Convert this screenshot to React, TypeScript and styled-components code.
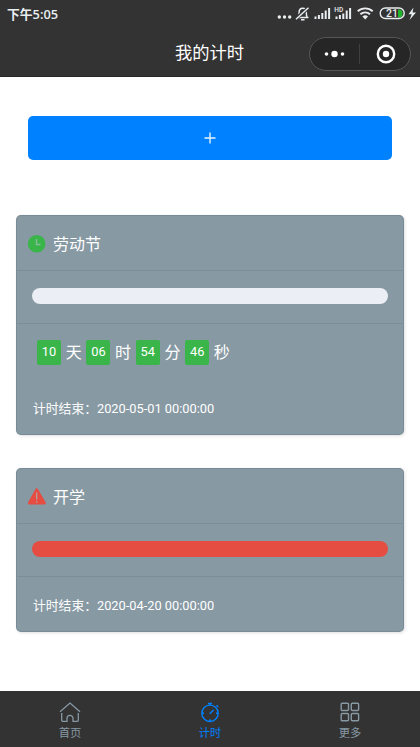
import React from "react";
import styled, { createGlobalStyle } from "styled-components";

const GlobalStyle = createGlobalStyle`
  * { box-sizing: border-box; }
  body { margin: 0; background: #fff; font-family: Roboto, "Noto Sans CJK SC", sans-serif; }
`;

const Screen = styled.div`
  display: flex;
  flex-direction: column;
  height: 747px;
  width: 420px;
  overflow: hidden;
`;

const Header = styled.header`
  height: 77px;
  background: #333;
  border-bottom: 1px solid #292626;
  color: #fff;
`;

const StatusBar = styled.div`
  display: flex;
  align-items: center;
  justify-content: space-between;
  height: 28px;
  padding: 0 3px 0 7px;
  color: #e9eef0;
`;

const Clock = styled.span`
  font: 600 12.8px/18px "Open Sans", "Noto Sans CJK SC", sans-serif;
`;

const NavBar = styled.div`
  display: grid;
  grid-template-columns: 1fr auto 1fr;
  align-items: center;
  height: 48px;
  padding: 1px 9px 0 0;
`;

const PageTitle = styled.h1`
  grid-column: 2;
  margin: 0;
  padding-left: 8px;
  font-size: 17.3px;
  font-weight: 400;
  line-height: 24px;
`;

const Capsule = styled.div`
  display: flex;
  align-items: center;
  justify-self: end;
  width: 102px;
  height: 34px;
  margin-top: 2px;
  border: 1px solid #565656;
  border-radius: 17px;
  background: #262626;
`;

const CapsuleHalf = styled.div`
  display: flex;
  flex: 1;
  align-items: center;
  justify-content: center;
  height: 20px;

  & + & {
    border-left: 1px solid #404040;
    padding-left: 1px;
  }
`;

const Content = styled.main`
  display: flex;
  flex: 1;
  flex-direction: column;
  padding: 39px 16px 0;
`;

const AddButton = styled.button`
  display: flex;
  align-items: center;
  justify-content: center;
  height: 44px;
  margin: 0 12px 55px;
  padding: 0;
  border: 0;
  border-radius: 5px;
  background: #0081ff;
`;

const Card = styled.section`
  margin-bottom: 33px;
  border-radius: 5px;
  background: #8799a3;
  box-shadow: 1px 1px 3px rgba(26, 26, 26, 0.14), inset 0 0 0 1px rgba(90, 110, 122, 0.3);
  color: #fff;
`;

const CardHeader = styled.div`
  display: flex;
  align-items: center;
  gap: 7px;
  height: 56px;
  padding: 2px 12px 0;
  border-bottom: 1px solid #7c8f99;
`;

const CardTitle = styled.h2`
  margin: 0;
  padding-top: 2px;
  font-size: 16px;
  font-weight: 400;
  line-height: 24px;
`;

const ProgressRow = styled.div`
  height: 53px;
  padding: 17px 16px 0;
  border-bottom: 1px solid #7c8f99;
`;

const Progress = styled.div<{ $done?: boolean }>`
  height: 16px;
  border-radius: 8px;
  background: ${(p) => (p.$done ? "#e54d42" : "#ebeef5")};
`;

const Countdown = styled.div`
  display: flex;
  align-items: center;
  height: 58px;
  padding: 0 0 2px 21px;
`;

const Digits = styled.span`
  display: flex;
  align-items: center;
  justify-content: center;
  width: 24px;
  height: 25px;
  padding-bottom: 1px;
  border-radius: 2px;
  background: #39b54a;
  font-size: 12.8px;
`;

const Unit = styled.span`
  width: 25.4px;
  padding-top: 2px;
  text-align: center;
  font-size: 16px;
  line-height: 24px;
`;

const EndTime = styled.div<{ $height: number; $lift?: number }>`
  display: flex;
  align-items: center;
  height: ${(p) => p.$height}px;
  padding: 0 17px ${(p) => p.$lift ?? 0}px;
  font-size: 12.8px;
  white-space: pre;
`;

const TabBar = styled.nav`
  display: grid;
  grid-template-columns: repeat(3, 1fr);
  height: 56px;
  background: #333;
`;

const Tab = styled.div<{ $active?: boolean }>`
  display: flex;
  flex-direction: column;
  align-items: center;
  padding-top: 10px;
  color: ${(p) => (p.$active ? "#0081ff" : "#8799a3")};
  font-size: 11.3px;
  line-height: 16px;

  svg {
    margin-bottom: 3px;
  }
`;

const BatteryText = styled.text`
  font: 500 10.5px Roboto, sans-serif;
`;

const HdText = styled.text`
  font: 500 6.5px Roboto, sans-serif;
`;

function StatusIcons() {
  return (
    <svg width="140" height="22" viewBox="0 0 140 22" fill="currentColor">
      <circle cx="2.300" cy="14" r="1.700" />
      <circle cx="7.500" cy="14" r="1.700" />
      <circle cx="12.700" cy="14" r="1.700" />
      <g fill="none" stroke="currentColor" strokeWidth="1.500">
        <path d="M19.500 14.500h12M21.300 14c.8-1 .8-2.500.8-4.500 0-2.800 1.400-4.300 3.600-4.300s3.600 1.500 3.600 4.300c0 2 0 3.500.8 4.500M24 16.700h3.500" />
        <path d="M18.500 16 31.500 4.800" stroke="#333" strokeWidth="3.500" />
        <path d="M19 16.300 31.500 4.800" />
      </g>
      <path d="M37.500 13.500h2V16h-2zM40.900 12h2v4h-2zM44.300 10h2v6h-2zM47.700 7.500h2V16h-2zM51.100 5h2v11h-2z" />
      <path d="M58.500 13.500h2V16h-2zM61.900 12h2v4h-2zM65.300 10.500h2V16h-2zM68.700 7.500h2V16h-2zM72.100 5h2v11h-2z" />
      <HdText x="57.300" y="8.700">HD</HdText>
      <g fill="none" stroke="currentColor" strokeWidth="1.900">
        <path d="M80.700 8.300a11 11 0 0 1 15 0M83.400 11.200a7.200 7.200 0 0 1 9.600 0" />
      </g>
      <path d="m88.200 16.500-2.800-3a4.300 4.300 0 0 1 5.600 0z" />
      <path d="M121 6.500h1a3.500 3.500 0 0 1 3.500 3.500v1a3.500 3.500 0 0 1-3.500 3.500h-1z" fill="#20b52a" />
      <rect x="103.200" y="5" width="24" height="10.500" rx="5.200" fill="none" stroke="currentColor" strokeWidth="1.400" />
      <BatteryText x="109" y="14">21</BatteryText>
      <path d="M136.500 4.500 131.500 11.300h3.200L132.500 17l6.500-7.500h-3.500z" />
    </svg>
  );
}

function ClockIcon() {
  return (
    <svg width="18" height="18" viewBox="0 0 18 18">
      <circle cx="8.700" cy="8.800" r="8.800" fill="#39b54a" />
      <path d="M8.500 4v5.500H12.500" fill="none" stroke="#87b99a" strokeWidth="1.400" />
    </svg>
  );
}

function WarnIcon() {
  return (
    <svg width="18" height="18" viewBox="0 0 18 18">
      <path d="M7.400 1.200q1.300-1.700 2.600 0L17.600 14.300q.8 2-1.200 2.200h-15Q-.5 16.300.1 14.300z" fill="#e54d42" />
      <path d="M8.700 4.500v7M8.700 13v1.500" stroke="#b0a4a4" strokeWidth="1.200" />
    </svg>
  );
}

function HomeIcon() {
  return (
    <svg width="22" height="22" viewBox="0 0 22 22" fill="none" stroke="currentColor" strokeWidth="1.300">
      <path d="M1 10.800 11 2l10 8.800M2.700 12v7.300q0 1 1 1H8v-3a3 3 0 0 1 6 0v3h4.300q1 0 1-1V12" />
    </svg>
  );
}

function TimerIcon() {
  return (
    <svg width="22" height="22" viewBox="0 0 22 22" fill="none" stroke="currentColor" strokeWidth="1.400">
      <circle cx="11" cy="12.300" r="8.200" />
      <path d="M9 2.500h4M11 2.500v1.600M10.700 12.800l4-4M17.500 4.300l1.800 1.800M3 12.300h2M17 12.300h2M11 18.300v2" />
    </svg>
  );
}

function GridIcon() {
  return (
    <svg width="22" height="22" viewBox="0 0 22 22" fill="none" stroke="currentColor" strokeWidth="1.400">
      <rect x="2.200" y="2.200" width="7.300" height="7.300" rx="1" />
      <rect x="12.300" y="2.200" width="7.300" height="7.300" rx="1" />
      <rect x="2.200" y="12.500" width="7.300" height="7.300" rx="1" />
      <rect x="12.300" y="12.500" width="7.300" height="7.300" rx="1" />
    </svg>
  );
}

const remaining = [
  ["10", "天"],
  ["06", "时"],
  ["54", "分"],
  ["46", "秒"],
];

export default function App() {
  return (
    <>
      <GlobalStyle />
      <Screen>
        <Header>
          <StatusBar>
            <Clock>下午5:05</Clock>
            <StatusIcons />
          </StatusBar>
          <NavBar>
            <PageTitle>我的计时</PageTitle>
            <Capsule>
              <CapsuleHalf>
                <svg width="22" height="10" viewBox="0 0 22 10" fill="#fff">
                  <circle cx="2.500" cy="5" r="1.800" />
                  <circle cx="10.500" cy="5" r="3.200" />
                  <circle cx="18.500" cy="5" r="1.800" />
                </svg>
              </CapsuleHalf>
              <CapsuleHalf>
                <svg width="20" height="20" viewBox="0 0 20 20">
                  <circle cx="10" cy="10" r="8.200" fill="none" stroke="#fff" strokeWidth="2.400" />
                  <circle cx="10" cy="10" r="3.200" fill="#fff" />
                </svg>
              </CapsuleHalf>
            </Capsule>
          </NavBar>
        </Header>
        <Content>
          <AddButton aria-label="添加">
            <svg width="12" height="12" viewBox="0 0 12 12" stroke="#e5f4ff" strokeWidth="1.400">
              <path d="M6 .5v11M.5 6h11" />
            </svg>
          </AddButton>
          <Card>
            <CardHeader>
              <ClockIcon />
              <CardTitle>劳动节</CardTitle>
            </CardHeader>
            <ProgressRow>
              <Progress />
            </ProgressRow>
            <Countdown>
              {remaining.map(([value, unit]) => (
                <React.Fragment key={unit}>
                  <Digits>{value}</Digits>
                  <Unit>{unit}</Unit>
                </React.Fragment>
              ))}
            </Countdown>
            <EndTime $height={53} $lift={2}>计时结束：2020-05-01 00:00:00</EndTime>
          </Card>
          <Card>
            <CardHeader>
              <WarnIcon />
              <CardTitle>开学</CardTitle>
            </CardHeader>
            <ProgressRow>
              <Progress $done />
            </ProgressRow>
            <EndTime $height={55}>计时结束：2020-04-20 00:00:00</EndTime>
          </Card>
        </Content>
        <TabBar>
          <Tab>
            <HomeIcon />
            首页
          </Tab>
          <Tab $active>
            <TimerIcon />
            计时
          </Tab>
          <Tab>
            <GridIcon />
            更多
          </Tab>
        </TabBar>
      </Screen>
    </>
  );
}
